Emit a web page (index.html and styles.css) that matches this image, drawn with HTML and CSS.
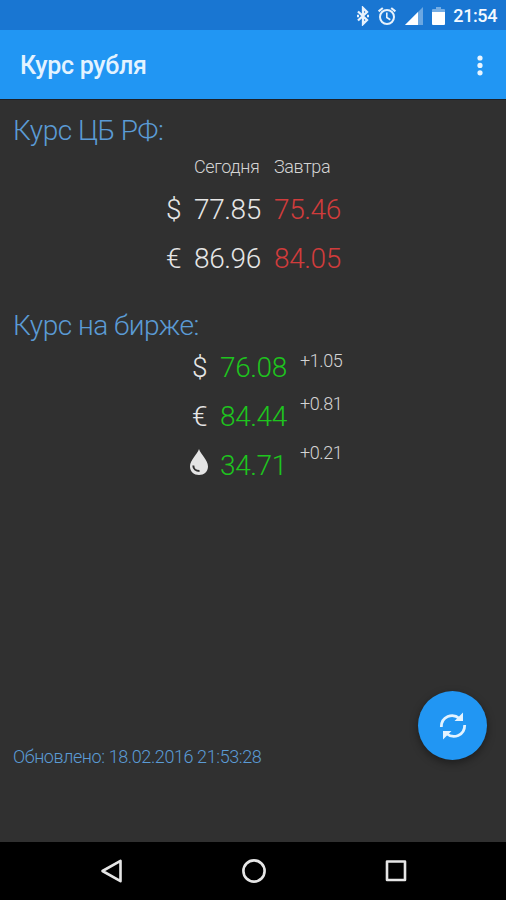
FILE: index.html
```html
<!DOCTYPE html>
<html lang="ru">
<head>
    <meta charset="UTF-8">
    <meta name="viewport" content="width=device-width, initial-scale=1.0">
    <title>Курс рубля</title>
    <link rel="stylesheet" href="styles.css">
</head>
<body>
    <div class="status">
        <svg class="bluetooth" width="14" height="20" viewBox="0 0 14 20">
            <path d="M2 5.5L11 14L7 18V2L11 6L2 14.5" fill="none" stroke="#e8f2fc" stroke-width="2.3"/>
            <path d="M1 8.8h2v2.4H1zM11 8.8h2v2.4h-2z" fill="#e8f2fc"/>
        </svg>
        <svg class="alarm" width="20" height="20" viewBox="0 0 20 20" fill="none" stroke="#e8f2fc" stroke-width="2">
            <circle cx="10" cy="11" r="7"/>
            <path d="M1.6 5.4L5.8 2M18.4 5.4L14.2 2"/>
            <path d="M9.8 6.5v5l3.5 2.2" stroke-width="1.6"/>
        </svg>
        <svg class="signal" width="18" height="18" viewBox="0 0 18 18">
            <path d="M0 18L18 0V18z" fill="#6ba7e2"/>
            <path d="M0 18L13 5V18z" fill="#fff"/>
        </svg>
        <svg class="battery" width="13" height="18" viewBox="0 0 13 18">
            <path d="M4 0h5v2h3q1 0 1 1v3H0V3q0-1 1-1h3z" fill="#75ade4"/>
            <path d="M0 5h13v12q0 1-1 1H1q-1 0-1-1z" fill="#fff"/>
        </svg>
        <span class="clock">21:54</span>
    </div>

    <div class="appbar">
        <h1 class="title">Курс рубля</h1>
        <svg class="more" width="6" height="21" viewBox="0 0 6 21" fill="#e8f5ff">
            <circle cx="3" cy="3" r="2.6"/>
            <circle cx="3" cy="10.4" r="2.6"/>
            <circle cx="3" cy="17.8" r="2.6"/>
        </svg>
    </div>

    <div class="content">
        <h2 class="heading">Курс ЦБ РФ:</h2>
        <div class="rates bank">
            <span></span>
            <span class="label">Сегодня</span>
            <span class="label">Завтра</span>

            <span>$</span>
            <span>77.85</span>
            <span class="down">75.46</span>

            <span>€</span>
            <span>86.96</span>
            <span class="down">84.05</span>
        </div>

        <h2 class="heading">Курс на бирже:</h2>
        <div class="rates market">
            <span>$</span>
            <span class="up">76.08</span>
            <span class="change first">+1.05</span>

            <span>€</span>
            <span class="up">84.44</span>
            <span class="change">+0.81</span>

            <svg class="drop" width="20" height="27" viewBox="0 0 20 27">
                <path d="M10 0C8.5 5 1 11 1 17.5C1 22.5 5 26 10 26S19 22.5 19 17.5C19 11 11.5 5 10 0z" fill="#e4e4e4"/>
                <path d="M4.3 16.5C4.3 20 7 22 10.5 22" fill="none" stroke="#303030" stroke-width="2"/>
            </svg>
            <span class="up">34.71</span>
            <span class="change">+0.21</span>
        </div>

        <div class="footer">
            <span class="updated">Обновлено: 18.02.2016 21:53:28</span>
            <div class="refresh">
                <svg width="30" height="30" viewBox="0 0 30 30">
                    <path d="M3.3 16C3.3 5.5 14.5 1.5 21.5 7.5M26.7 14C26.7 24.5 15.5 28.5 8.5 22.5" fill="none" stroke="#e3f3ff" stroke-width="2.8"/>
                    <path d="M25 1.5V10H16.5zM5 28.5V20H13.5z" fill="#e3f3ff"/>
                </svg>
            </div>
        </div>
    </div>

    <div class="navbar">
        <svg width="24" height="26" viewBox="0 0 24 26">
            <path d="M2.5 13L20.5 2.8V23.2z"/>
        </svg>
        <svg width="26" height="26" viewBox="0 0 26 26">
            <circle cx="13" cy="13" r="10.6"/>
        </svg>
        <svg width="24" height="26" viewBox="0 0 24 26">
            <rect x="3" y="3.5" width="18" height="18.5"/>
        </svg>
    </div>
</body>
</html>
```
FILE: styles.css
```css
body {
    margin: 0;
    height: 900px;
    display: flex;
    flex-direction: column;
    background-color: #303030;
    color: #e6e6e6;
    font-family: Roboto, "Liberation Sans", sans-serif;
    font-weight: 300;
}
h1, h2 { margin: 0; }
svg { display: block; }

.status {
    height: 30px;
    display: flex;
    align-items: center;
    justify-content: flex-end;
    box-sizing: border-box;
    padding: 1px 9px 0 0;
    background-color: #1976d2;
}
.alarm { margin-left: 7px; }
.signal { margin-left: 8px; }
.battery { margin-left: 9px; }
.clock {
    margin-left: 8px;
    color: #f4f9ff;
    font-size: 18px;
    font-weight: 500;
    letter-spacing: -.4px;
}

.appbar {
    height: 70px;
    display: flex;
    align-items: center;
    justify-content: space-between;
    box-sizing: border-box;
    padding: 2px 23px 0 20px;
    background-color: #2196f3;
    border-bottom: 1px solid #1c2026;
}
.title {
    color: #e3f3ff;
    font-size: 25px;
    font-weight: 500;
    letter-spacing: -.3px;
}

.content {
    flex: 1;
    display: flex;
    flex-direction: column;
    padding: 14px 19px 0 13px;
}
.heading {
    color: #5b9bd5;
    font-size: 28px;
    line-height: 33px;
    font-weight: 300;
    letter-spacing: -.5px;
}
.rates {
    display: grid;
    font-size: 28px;
    line-height: 49px;
    letter-spacing: -.4px;
}
.bank {
    grid-template-columns: 28px 80px 80px;
    grid-template-rows: 29px 49px 49px;
    padding: 9px 0 26px 153px;
}
.market {
    grid-template-columns: 28px 80px 60px;
    grid-template-rows: 49px 49px 49px;
    padding: 1px 0 0 179px;
}
.label {
    color: #d4d4d4;
    font-size: 18px;
    line-height: 21px;
}
.down { color: #d03c3c; }
.up { color: #1ec41e; }
.change {
    margin-top: 1px;
    color: #d4d4d4;
    font-size: 18px;
    line-height: 21px;
}
.first { margin-top: 7px; }
.drop { margin: 8px 0 0 -3px; }

.footer {
    margin-top: auto;
    height: 151px;
    display: flex;
    align-items: flex-start;
    justify-content: space-between;
}
.updated {
    margin-top: 55px;
    color: #5b9bd5;
    font-size: 18px;
    line-height: 21px;
    letter-spacing: -.4px;
}
.refresh {
    width: 69px; height: 69px;
    display: flex;
    align-items: center;
    justify-content: center;
    border-radius: 50%;
    background-color: #2196f3;
    box-shadow: 0 3px 8px rgba(0, 0, 0, .4);
}

.navbar {
    height: 58px;
    display: flex;
    align-items: center;
    justify-content: space-between;
    box-sizing: border-box;
    padding: 0 98px 0 100px;
    background-color: #000;
}
.navbar svg {
    fill: none;
    stroke: #e6e6e6;
    stroke-width: 2.6;
    stroke-linejoin: round;
}
```
